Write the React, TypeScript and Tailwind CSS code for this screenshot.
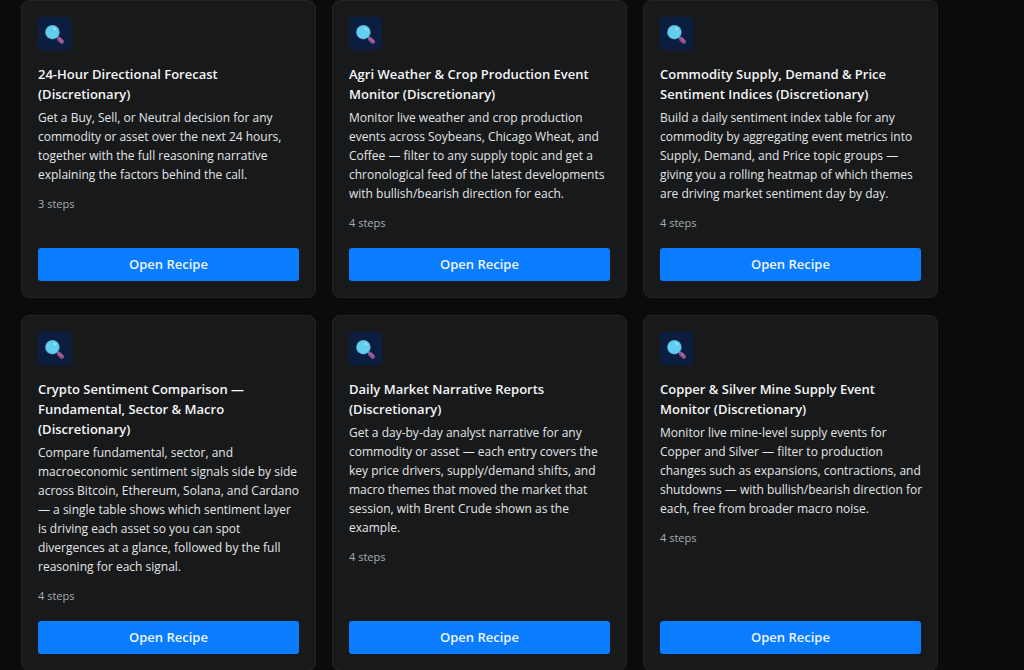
type Recipe = {
  title: string;
  description: string;
  steps: number;
};

const recipes: Recipe[] = [
  {
    title: "24-Hour Directional Forecast (Discretionary)",
    description:
      "Get a Buy, Sell, or Neutral decision for any commodity or asset over the next 24 hours, together with the full reasoning narrative explaining the factors behind the call.",
    steps: 3,
  },
  {
    title: "Agri Weather & Crop Production Event Monitor (Discretionary)",
    description:
      "Monitor live weather and crop production events across Soybeans, Chicago Wheat, and Coffee — filter to any supply topic and get a chronological feed of the latest developments with bullish/bearish direction for each.",
    steps: 4,
  },
  {
    title: "Commodity Supply, Demand & Price Sentiment Indices (Discretionary)",
    description:
      "Build a daily sentiment index table for any commodity by aggregating event metrics into Supply, Demand, and Price topic groups — giving you a rolling heatmap of which themes are driving market sentiment day by day.",
    steps: 4,
  },
  {
    title: "Crypto Sentiment Comparison — Fundamental, Sector & Macro (Discretionary)",
    description:
      "Compare fundamental, sector, and macroeconomic sentiment signals side by side across Bitcoin, Ethereum, Solana, and Cardano — a single table shows which sentiment layer is driving each asset so you can spot divergences at a glance, followed by the full reasoning for each signal.",
    steps: 4,
  },
  {
    title: "Daily Market Narrative Reports (Discretionary)",
    description:
      "Get a day-by-day analyst narrative for any commodity or asset — each entry covers the key price drivers, supply/demand shifts, and macro themes that moved the market that session, with Brent Crude shown as the example.",
    steps: 4,
  },
  {
    title: "Copper & Silver Mine Supply Event Monitor (Discretionary)",
    description:
      "Monitor live mine-level supply events for Copper and Silver — filter to production changes such as expansions, contractions, and shutdowns — with bullish/bearish direction for each, free from broader macro noise.",
    steps: 4,
  },
];

function MagnifierIcon() {
  return (
    <svg viewBox="0 0 21 21" className="h-[21px] w-[21px]" aria-hidden="true">
      <path d="M13.2 13.8l1.8 1.8" stroke="#8d84a8" strokeWidth="2" />
      <path d="M15.2 16.2l2.6 2.4" stroke="#8f4f8b" strokeWidth="4.4" strokeLinecap="round" />
      <path d="M15.2 15.4l2.6 2.4" stroke="#ad70a6" strokeWidth="1.2" strokeLinecap="round" />
      <circle cx="8.4" cy="9.2" r="7.3" fill="#4b9dbb" />
      <circle cx="8.4" cy="9.2" r="6.6" fill="#63cdf0" />
      <ellipse cx="10.8" cy="5.9" rx="1.6" ry="0.9" transform="rotate(35 10.8 5.9)" fill="#a5e6f8" />
    </svg>
  );
}

function RecipeCard({ recipe }: { recipe: Recipe }) {
  return (
    <article className="flex flex-col rounded-lg border border-[#222426] bg-[#17191a] p-4">
      <div className="flex h-[33px] w-[33px] items-center justify-center rounded-sm bg-[#0c1e3f]">
        <MagnifierIcon />
      </div>
      <h2 className="mt-[14px] text-[13px] leading-5 font-semibold text-[#f5f6f7]">{recipe.title}</h2>
      <p className="mt-1 -mr-[3px] text-xs leading-[19px] text-[#e4e6e8]">{recipe.description}</p>
      <p className="mt-3 mb-[17px] text-[11px] leading-4 text-[#a9adb2]">{recipe.steps} steps</p>
      <button
        type="button"
        className="mt-auto h-[33px] w-full rounded-[3px] bg-[#0a7cff] text-[13px] font-semibold text-[#eef5ff] hover:bg-[#2b8dff]"
      >
        Open Recipe
      </button>
    </article>
  );
}

export default function App() {
  return (
    <main className="min-h-screen bg-[#0a0b0d] pr-[86px] pb-4 pl-[21px] font-['Open_Sans','Noto_Sans',sans-serif]">
      <div className="grid grid-cols-3 gap-x-4 gap-y-[17px]">
        {recipes.map((recipe) => (
          <RecipeCard key={recipe.title} recipe={recipe} />
        ))}
      </div>
    </main>
  );
}
